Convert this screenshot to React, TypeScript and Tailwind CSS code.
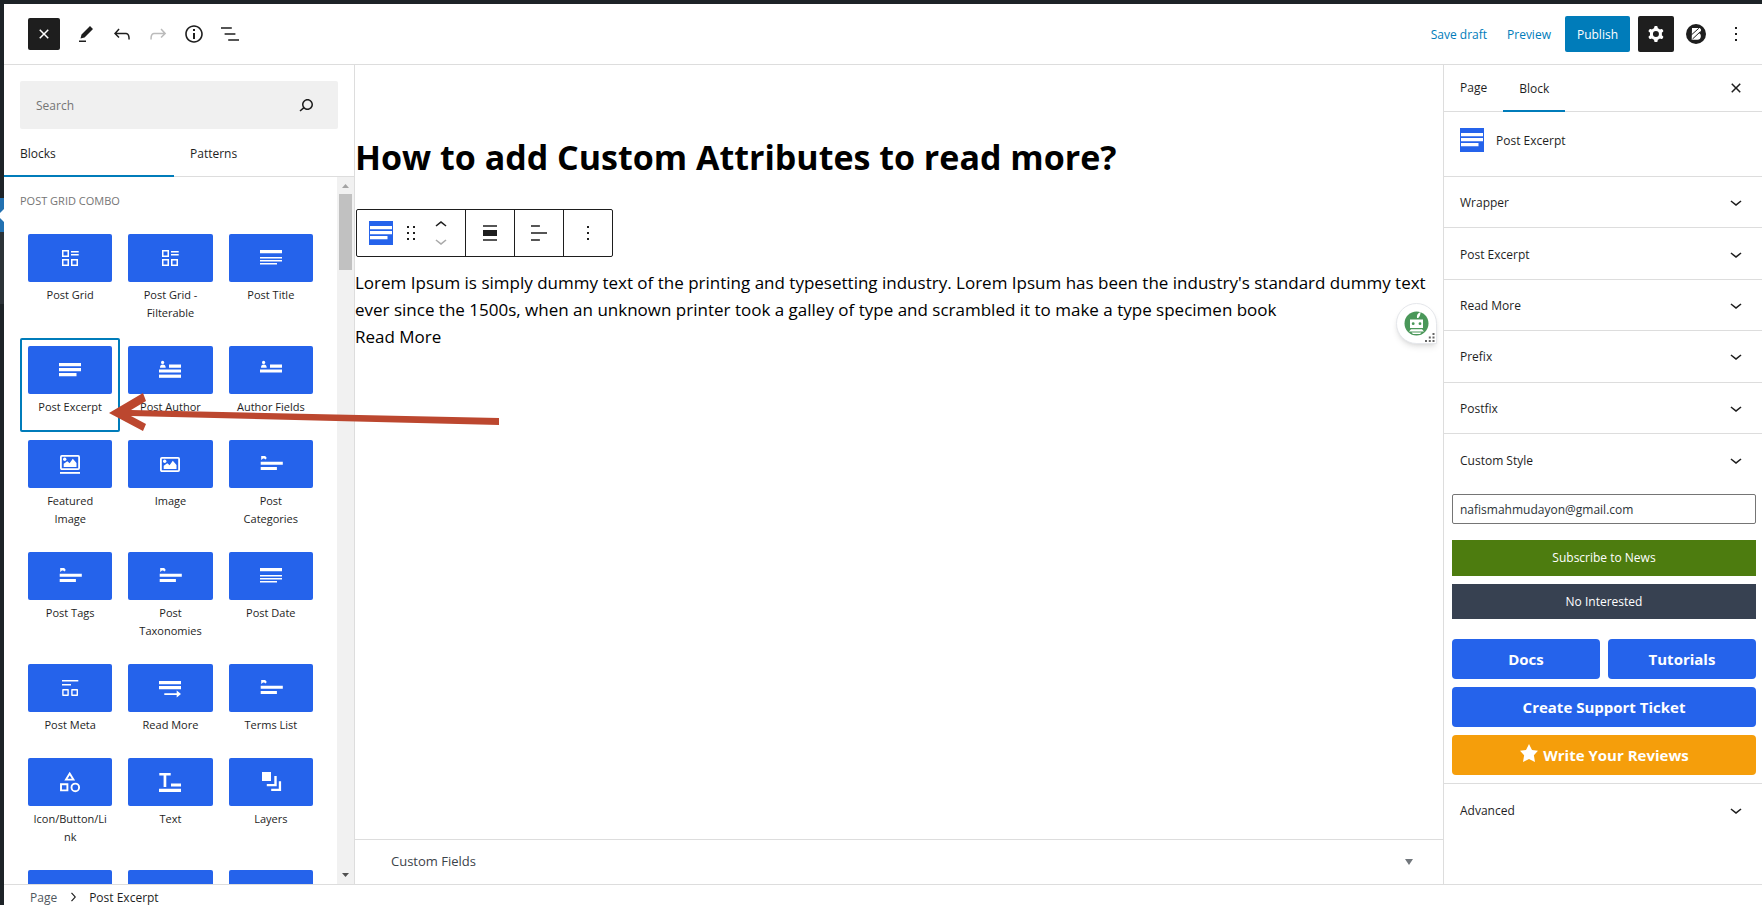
import { useState } from "react";
import type { ReactNode } from "react";

const paths = {
  close: "M12 13.06l3.712 3.713 1.061-1.06L13.061 12l3.712-3.712-1.06-1.06L12 10.938 8.288 7.227l-1.061 1.06L10.939 12l-3.712 3.712 1.06 1.061L12 13.061z",
  edit: "m19 7-3-3-8.5 8.5-1 4 4-1L19 7Zm-7 11.5H5V20h7v-1.5Z",
  undo: "M18.3 11.7c-.6-.6-1.4-.9-2.3-.9H6.7l2.9-3.3-1.1-1-4.5 5L8.5 16l1-1-2.7-2.7H16c.5 0 .9.2 1.3.5 1 1 1 3.4 1 4.5v.3h1.5v-.2c0-1.5 0-4.3-1.5-5.7z",
  redo: "M15.6 6.5l-1.1 1 2.9 3.3H8c-.9 0-1.7.3-2.3.9-1.4 1.5-1.4 4.2-1.4 5.6v.2h1.5v-.3c0-1.1 0-3.5 1-4.5.3-.3.7-.5 1.3-.5h9.2L14.5 15l1.1 1.1 4.6-4.6-4.6-5z",
  info: "M12 3.2c-4.8 0-8.8 3.9-8.8 8.8 0 4.8 3.9 8.8 8.8 8.8 4.8 0 8.8-3.9 8.8-8.8 0-4.8-4-8.8-8.8-8.8zm0 16c-4 0-7.2-3.3-7.2-7.2C4.8 8 8 4.8 12 4.8s7.2 3.3 7.2 7.2c0 4-3.2 7.2-7.2 7.2zM11 17h2v-6h-2v6zm0-8h2V7h-2v2z",
  list: "M13.8 5.2H3v1.5h10.8V5.2zm-3.6 12v1.5H21v-1.5H10.2zm7.2-6H6.6v1.5h10.8v-1.5z",
  search: "M13.5 6C10.5 6 8 8.5 8 11.5c0 1.1.3 2.1.9 3l-3.4 3 1 1.1 3.4-2.9c1 .9 2.2 1.4 3.6 1.4 3 0 5.5-2.5 5.5-5.5C19 8.5 16.5 6 13.5 6zm0 9.5c-2.2 0-4-1.8-4-4s1.8-4 4-4 4 1.8 4 4-1.8 4-4 4z",
  more: "M13 19h-2v-2h2v2zm0-6h-2v-2h2v2zm0-6h-2V5h2v2z",
  down: "M17.5 11.6L12 16l-5.5-4.4.9-1.2L12 14l4.5-3.6 1 1.2z",
  up: "M6.5 12.4L12 8l5.5 4.4-.9 1.2L12 10l-4.5 3.6-1-1.2z",
  right: "M10.6 6L9.4 7l4.6 5-4.6 5 1.2 1 5.4-6z",
  drag: "M8 7h2V5H8v2zm0 6h2v-2H8v2zm0 6h2v-2H8v2zm6-14v2h2V5h-2zm0 8h2v-2h-2v2zm0 6h2v-2h-2v2z",
  alignNone: "M5 15h14V9H5v6zm0 4.8h14v-1.5H5v1.5zM5 4.2v1.5h14V4.2H5z",
  alignLeft: "M4 19.8h8.9v-1.5H4v1.5zm8.9-15.6H4v1.5h8.9V4.2zm-8.9 7v1.5h16v-1.5H4z",
  gear: "M10.289 4.836A1 1 0 0111.275 4h1.306a1 1 0 01.987.836l.244 1.466c.787.26 1.503.679 2.108 1.218l1.393-.522a1 1 0 011.216.437l.653 1.13a1 1 0 01-.23 1.273l-1.148.944a6.025 6.025 0 010 2.435l1.149.946a1 1 0 01.23 1.272l-.653 1.13a1 1 0 01-1.216.437l-1.394-.522c-.605.54-1.32.958-2.108 1.218l-.244 1.466a1 1 0 01-.987.836h-1.306a1 1 0 01-.986-.836l-.244-1.466a5.995 5.995 0 01-2.108-1.218l-1.394.522a1 1 0 01-1.217-.436l-.653-1.131a1 1 0 01.23-1.272l1.149-.946a6.026 6.026 0 010-2.435l-1.148-.944a1 1 0 01-.23-1.272l.653-1.131a1 1 0 011.217-.437l1.393.522a5.994 5.994 0 012.108-1.218l.244-1.466zM14.929 12a3 3 0 11-6 0 3 3 0 016 0z",
};

function Icon({ name, className = "size-6" }: { name: keyof typeof paths; className?: string }) {
  return (
    <svg viewBox="0 0 24 24" className={`${className} shrink-0 fill-current`} fillRule="evenodd" aria-hidden="true">
      <path d={paths[name]} />
    </svg>
  );
}

function IconButton({ name, label, className = "" }: { name: keyof typeof paths; label: string; className?: string }) {
  return (
    <button type="button" aria-label={label} className={`flex size-9 items-center justify-center ${className}`}>
      <Icon name={name} />
    </button>
  );
}

const excerptArt = <path d="M1 5h22v3.3H1zM1 10h22v3.3H1zM1 15h17.5v3.3H1z" />;
const linesArt = <path d="M1 4h22v3.3H1zM1 11h22v1.4H1zM1 14h22v1.5H1zM1 17h17v1.5H1z" />;
const gridArt = (
  <>
    <path d="M4.75 4.75h5.5v5.5h-5.5zM4.75 13.75h5.5v5.5h-5.5zM13.75 13.75h5.5v5.5h-5.5z" fill="none" stroke="currentColor" strokeWidth="1.5" />
    <path d="M13 5h7.7v1.5H13zM13 8h7.7v1.5H13z" />
  </>
);
const personArt = (
  <>
    <circle cx="4.6" cy="4.4" r="1.6" />
    <path d="M2 9.7c0-2.2 1-3.3 2.8-3.3s2.9 1.1 2.9 3.3zM11 6.6h12v3.2H11zM1 11.4h22v3.2H1z" />
  </>
);
const tagArt = (
  <path d="M2.2 4h4l1.6 1.9-1.4 1.7-1.2-1H4L2.2 7.9zM1.7 9.7h22.1v3.1H1.7zM1.7 15h16.2v3.1H1.7z" />
);
const pictureArt = (
  <>
    <rect x="2.9" y="5.9" width="18.2" height="13.2" rx="1" fill="none" stroke="currentColor" strokeWidth="1.8" />
    <path d="M5.700 17v-3.200l3.600-2.600 2.300 2 3.200-4.400 3.700 4.100V17z" />
    <circle cx="6.700" cy="9.300" r="1.700" />
  </>
);

type Block = { name: string; art?: ReactNode; active?: boolean };
const blocks: Block[] = [
  { name: "Post Grid", art: gridArt },
  { name: "Post Grid - Filterable", art: gridArt },
  { name: "Post Title", art: linesArt },
  { name: "Post Excerpt", art: excerptArt, active: true },
  { name: "Post Author", art: <>{personArt}<path d="M1 16.6h22v3.2H1z" /></> },
  { name: "Author Fields", art: personArt },
  { name: "Featured Image", art: <><g transform="translate(0 -2)">{pictureArt}</g><path d="M2 20h20v1.8H2z" /></> },
  { name: "Image", art: pictureArt },
  { name: "Post Categories", art: tagArt },
  { name: "Post Tags", art: tagArt },
  { name: "Post Taxonomies", art: tagArt },
  { name: "Post Date", art: linesArt },
  {
    name: "Post Meta",
    art: (
      <>
        <path d="M4 4h16.3v1.4H4zM4 8h9v1.4H4z" />
        <path d="M4.9 13.7h5.2v5.6H4.9zM13.9 13.7h5.4v5.6h-5.4z" fill="none" stroke="currentColor" strokeWidth="1.4" strokeLinejoin="round" />
      </>
    ),
  },
  { name: "Read More", art: <path d="M1 5h22v3.2H1zM1 10h22v3.2H1zM6.3 17.200h12.400v-2.600L23 18l-4.300 3.600V19H6.300z" /> },
  { name: "Terms List", art: tagArt },
  {
    name: "Icon/Button/Link",
    art: (
      <g fill="none" stroke="currentColor" strokeWidth="1.9">
        <path d="M11.700 3.600l3.700 6H8z" />
        <path d="M3 14.300h6.400v6.100H3z" />
        <circle cx="17.300" cy="17.400" r="3.800" />
      </g>
    ),
  },
  { name: "Text", art: <path d="M1.300 3h11.400v2.500H8.300V17H5.600V5.500H1.300zM13 13.400h10v3H13zM1 18.800h22v3.100H1z" /> },
  { name: "Layers", art: <path d="M3 2h9v9H3zM15.300 6h2.400v10.200H7.800v-2.300h7.500zM19.800 11.200h2.300V21H12.200v-2.300h7.600z" /> },
  { name: "Menu" },
  { name: "Accordion" },
  { name: "Tabs" },
];

function BlockTile({ name, art, active }: Block) {
  return (
    <button
      type="button"
      aria-label={name}
      className={`flex flex-col rounded-xs px-2 pt-2 ${active ? "outline-2 -outline-offset-2 outline-[#007cba]" : ""}`}
    >
      <span className="flex h-12 w-full items-center justify-center rounded-xs bg-[#2563eb] text-white">
        <svg viewBox="0 0 24 24" className="size-6 overflow-visible fill-current" aria-hidden="true">
          {art}
        </svg>
      </span>
      {art && <span className="w-full px-1 pt-1 pb-4 text-center text-[11px] leading-[18px] wrap-anywhere">{name}</span>}
    </button>
  );
}

function BlockBadge() {
  return (
    <svg viewBox="0 0 24 24" className="size-6 shrink-0 bg-[#2563eb] fill-white" aria-hidden="true">
      {excerptArt}
    </svg>
  );
}

function Inserter() {
  return (
    <aside className="flex w-[351px] shrink-0 flex-col border-r border-[#ddd]">
      <label className="mx-4 mt-4 flex h-12 items-center justify-between rounded-xs bg-[#f0f0f0] pr-5 pl-4">
        <input type="search" aria-label="Search" placeholder="Search" className="min-w-0 flex-1 bg-transparent pt-0.5 text-xs outline-none placeholder:text-[#757575]" />
        <Icon name="search" />
      </label>
      <div role="tablist" className="flex h-12 shrink-0 border-b border-[#ddd] text-xs font-medium">
        <button type="button" role="tab" aria-selected="true" className="-mb-px w-[170px] border-b-2 border-[#007cba] px-4 pt-1 text-left">
          Blocks
        </button>
        <button type="button" role="tab" aria-selected="false" className="w-[170px] px-4 pt-0.5 text-left">
          Patterns
        </button>
      </div>
      <div className="flex min-h-0 flex-1">
        <div className="min-w-0 flex-1 overflow-hidden pl-4">
          <h2 className="pt-[15px] pb-4 text-[11px] leading-[18px] font-medium text-[#757575] uppercase">Post Grid Combo</h2>
          <div className="mr-4 grid grid-cols-3">
            {blocks.map((b) => (
              <BlockTile key={b.name} {...b} />
            ))}
          </div>
        </div>
        <div className="flex w-[17px] shrink-0 flex-col items-center bg-[#f1f1f1]" aria-hidden="true">
          <svg viewBox="0 0 17 17" className="size-[17px] fill-[#a3a3a3]">
            <path d="M5 11h7L8.500 7z" />
          </svg>
          <div className="h-[76px] w-[13px] bg-[#c1c1c1]" />
          <svg viewBox="0 0 17 17" className="mt-auto size-[17px] fill-[#505050]">
            <path d="M5 6h7L8.500 10z" />
          </svg>
        </div>
      </div>
    </aside>
  );
}

function BlockToolbar() {
  return (
    <div role="toolbar" aria-label="Block tools" className="ml-px flex h-12 w-fit divide-x divide-[#1e1e1e] rounded-xs border border-[#1e1e1e] text-[#1e1e1e]">
      <div className="flex w-[109px] items-center pl-3">
        <button type="button" aria-label="Post Excerpt">
          <BlockBadge />
        </button>
        <button type="button" aria-label="Drag" className="ml-1.5">
          <Icon name="drag" />
        </button>
        <div className="ml-1.5 flex flex-col">
          <button type="button" aria-label="Move up" className="flex h-4 items-center overflow-hidden">
            <Icon name="up" />
          </button>
          <button type="button" aria-label="Move down" className="flex h-4 items-center overflow-hidden text-[#aaa]">
            <Icon name="down" />
          </button>
        </div>
      </div>
      <button type="button" aria-label="Align" className="flex w-[49px] items-center justify-center">
        <Icon name="alignNone" />
      </button>
      <button type="button" aria-label="Align text" className="flex w-[49px] items-center justify-center">
        <Icon name="alignLeft" />
      </button>
      <button type="button" aria-label="Options" className="flex w-12 items-center justify-center">
        <Icon name="more" />
      </button>
    </div>
  );
}

function Assistant() {
  return (
    <button
      type="button"
      aria-label="Writing assistant"
      className="absolute top-[238px] right-1.5 flex size-[41px] items-center justify-center rounded-full rounded-br-none border border-gray-200 bg-white shadow-md"
    >
      <svg viewBox="0 0 41 41" className="size-[41px] shrink-0" aria-hidden="true">
        <circle cx="20.500" cy="20.500" r="12" fill="#4a9759" />
        <path d="M21 15c-.5-3 .8-5 3.600-6-.2 3-1 5-2.400 6zM14 16.500h13V25H14z" fill="#fff" />
        <path d="M15 26.300h11l2 2.200h-15zM15.500 29.500h10l-1.500 1.500h-7z" fill="#fff" />
        <circle cx="17.200" cy="20.700" r="1.400" fill="#4a9759" />
        <circle cx="24" cy="20.700" r="1.400" fill="#4a9759" />
        <path d="M36.500 30h2v2h-2zM32.800 33.500h2v2h-2zM36.500 33.500h2v2h-2zM29 37h2v2h-2zM32.800 37h2v2h-2zM36.500 37h2v2h-2z" fill="#666" />
      </svg>
    </button>
  );
}

function PanelRow({ title, className = "" }: { title: string; className?: string }) {
  return (
    <button type="button" className={`flex w-full items-center justify-between pr-3.5 pl-4 text-left text-xs font-medium ${className}`}>
      <span className="pt-0.5">{title}</span>
      <Icon name="down" />
    </button>
  );
}

function Settings() {
  const [email, setEmail] = useState("nafismahmudayon@gmail.com");
  return (
    <aside className="w-[319px] shrink-0 overflow-hidden border-l border-[#ddd]">
      <div className="flex h-[47px] items-stretch border-b border-[#ddd] text-xs font-medium">
        <button type="button" className="px-4">Page</button>
        <button type="button" className="-mb-px border-b-2 border-[#007cba] px-4 pt-0.5">Block</button>
        <button type="button" aria-label="Close settings" className="mr-3.5 ml-auto">
          <Icon name="close" />
        </button>
      </div>
      <div className="flex h-[65px] gap-3 border-b border-[#ddd] px-4 pt-4">
        <BlockBadge />
        <h2 className="pt-px text-xs leading-6 font-medium">Post Excerpt</h2>
      </div>
      <div className="flex h-[257px] flex-col">
        {["Wrapper", "Post Excerpt", "Read More", "Prefix", "Postfix"].map((t) => (
          <PanelRow key={t} title={t} className="flex-1 border-b border-[#ddd]" />
        ))}
      </div>
      <PanelRow title="Custom Style" className="h-[52px]" />
      <div className="flex flex-col gap-2 border-b border-[#ddd] py-2 pr-1.5 pl-2 text-xs">
        <input
          type="email"
          aria-label="Email"
          value={email}
          onChange={(e) => setEmail(e.target.value)}
          className="mb-2 h-[30px] rounded-xs border border-[#757575] px-[7px] text-[#2c3338] outline-none"
        />
        <button type="button" className="h-9 bg-[#4d7c0f] text-white">Subscribe to News</button>
        <button type="button" className="h-[35px] bg-[#374151] text-white">No Interested</button>
        <div className="mt-3 grid grid-cols-2 gap-2 text-[15px] font-bold text-white">
          <a href="#docs" className="flex h-10 items-center justify-center rounded-sm bg-[#2563eb]">Docs</a>
          <a href="#tutorials" className="flex h-10 items-center justify-center rounded-sm bg-[#2563eb]">Tutorials</a>
          <a href="#support" className="col-span-2 flex h-10 items-center justify-center rounded-sm bg-[#2563eb]">Create Support Ticket</a>
          <a href="#reviews" className="col-span-2 flex h-10 items-center justify-center gap-1 rounded-sm bg-[#f59e0b]">
            <svg viewBox="0 0 20 20" className="-mt-1 size-5 fill-white" aria-hidden="true">
              <path d="m10 1 3 6 6 .75-4.120 4.620L16 19l-6-3-6 3 1.130-6.630L1 7.750 7 7z" />
            </svg>
            Write Your Reviews
          </a>
        </div>
      </div>
      <PanelRow title="Advanced" className="h-[51px]" />
    </aside>
  );
}

export default function App() {
  return (
    <div className="relative flex h-screen flex-col overflow-hidden bg-white font-['Open_Sans','Noto_Sans',sans-serif] text-[#1e1e1e]">
      <div className="h-1 shrink-0 bg-[#1d2327]" />
      <div className="flex min-h-0 flex-1">
        <div className="flex w-1 shrink-0 flex-col bg-[#1d2327]" aria-hidden="true">
          <svg viewBox="0 0 4 34" className="mt-[194px] h-[34px] w-1">
            <path d="M0 0h4v34H0z" fill="#2271b1" />
            <path d="M4 11v13L0 20v-5z" fill="#fff" />
          </svg>
          <div className="h-[72px] bg-[#2c3338]" />
        </div>
        <div className="flex min-w-0 flex-1 flex-col">
          <header className="flex h-[61px] shrink-0 items-center border-b border-[#ddd] pr-2 pl-6">
            <button type="button" aria-label="Close inserter" className="mr-2 flex size-8 items-center justify-center rounded-xs bg-[#1e1e1e] text-white">
              <Icon name="close" />
            </button>
            <IconButton name="edit" label="Tools" />
            <IconButton name="undo" label="Undo" />
            <IconButton name="redo" label="Redo" className="text-[#bbb]" />
            <IconButton name="info" label="Details" />
            <IconButton name="list" label="List view" />
            <div className="ml-auto flex items-center text-xs">
              <button type="button" className="px-2.5 pt-0.5 text-[#007cba]">Save draft</button>
              <button type="button" className="mr-1 px-2.5 pt-0.5 text-[#007cba]">Preview</button>
              <button type="button" className="mr-2 h-9 rounded-xs bg-[#007cba] px-3 pt-0.5 text-white">Publish</button>
              <button type="button" aria-label="Settings" className="flex size-9 items-center justify-center rounded-xs bg-[#1e1e1e] text-white">
                <Icon name="gear" />
              </button>
              <button type="button" aria-label="Plugin" className="mx-1 flex size-9 items-center justify-center">
                <svg viewBox="0 0 20 20" className="size-5" aria-hidden="true">
                  <circle cx="10" cy="10" r="10" fill="#1e1e1e" />
                  <path d="M6 4h6.800c2.400 0 3 2.700 1.300 4.300l-1 .9c2.700.8 2.400 6.600-1.600 6.600H5.700z" fill="#fff" />
                  <path d="M5.300 11L12.800 4.300M6.500 15L14.500 7.500" stroke="#1e1e1e" strokeWidth="1" />
                </svg>
              </button>
              <IconButton name="more" label="Options" />
            </div>
          </header>
          <div className="flex min-h-0 flex-1">
            <Inserter />
            <main className="relative flex min-w-0 flex-1 flex-col">
              <div className="min-h-0 flex-1 text-black">
                <h1 className="pt-[67px] text-[34px] leading-[50px] font-bold">How to add Custom Attributes to read more?</h1>
                <div className="pt-[27px] pb-3">
                  <BlockToolbar />
                </div>
                <p className="pr-4 text-[17px] leading-[27px]">
                  Lorem Ipsum is simply dummy text of the printing and typesetting industry. Lorem Ipsum has been the industry's standard dummy text
                  ever since the 1500s, when an unknown printer took a galley of type and scrambled it to make a type specimen book
                </p>
                <a href="#more" className="block w-fit text-[17px] leading-[27px]">Read More</a>
              </div>
              <button type="button" className="flex h-[45px] shrink-0 items-center justify-between border-t border-[#ddd] pr-7 pl-9 text-[13px] font-medium text-[#3c434a]">
                Custom Fields
                <svg viewBox="0 0 12 12" className="size-3 fill-[#72777c]" aria-hidden="true">
                  <path d="M2 3h8L6 9z" />
                </svg>
              </button>
              <Assistant />
            </main>
            <Settings />
          </div>
          <footer className="flex h-[21px] shrink-0 items-start gap-[7px] border-t border-[#ddd] pl-[26px] text-xs leading-[25px]">
            <a href="#page" className="text-[#50575e]">Page</a>
            <Icon name="right" className="h-6 w-[18px]" />
            <span>Post Excerpt</span>
          </footer>
        </div>
      </div>
      <svg viewBox="0 0 392 64" className="pointer-events-none absolute top-96 left-[109px] h-16 w-[392px] fill-[#bc472f]" aria-hidden="true">
        <path d="M0 29L34 9l3 8-15 9 368 8v7L22 32l15 8-3 7z" />
      </svg>
    </div>
  );
}
